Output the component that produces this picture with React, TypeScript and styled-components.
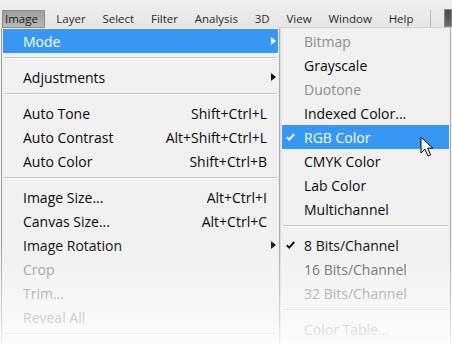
import { createGlobalStyle, styled } from 'styled-components';

const GlobalStyle = createGlobalStyle`
  html, body {
    margin: 0;
    padding: 0;
    background: #f4f4f4;
  }
  body {
    font-family: 'Open Sans', 'Noto Sans', sans-serif;
  }
`;

const Screen = styled.div`
  position: relative;
  width: 452px;
  height: 344px;
  overflow: hidden;
  background: #f4f4f4;
`;

const MenuBar = styled.nav`
  height: 28px;
  display: flex;
  align-items: flex-end;
  padding-left: 2px;
  background: linear-gradient(#efefef, #e4e4e4);
  font-size: 11.5px;
  color: #111;
`;

const BarItem = styled.div<{ $active?: boolean }>`
  height: 18px;
  line-height: 18px;
  padding: ${(p) => (p.$active ? '0 7px 0 3px' : '0 8.4px')};
  margin-right: ${(p) => (p.$active ? '3px' : '0')};
  box-sizing: border-box;
  background: ${(p) =>
    p.$active ? 'linear-gradient(#9c9c9c, #b9b9b9)' : 'transparent'};
  box-shadow: ${(p) => (p.$active ? 'inset 0 0 0 1px #8a8a8a' : 'none')};
  color: ${(p) => (p.$active ? '#1a1a1a' : '#2a2a2a')};
`;

const BarDivider = styled.div`
  width: 1px;
  height: 17px;
  margin: 0 14px 1px 8px;
  background: #b8b8b8;
`;

const BarBox = styled.div`
  width: 10px;
  height: 16px;
  margin-bottom: 1px;
  background: linear-gradient(#4a4a4a, #6a6a6a);
  border: 1px solid #888;
`;

const Menus = styled.div`
  display: flex;
  align-items: flex-start;
  font-size: 14px;
`;

const Panel = styled.div<{ $width: number }>`
  width: ${(p) => p.$width}px;
  box-sizing: border-box;
  background: #f0f0f0;
  border-left: 1px solid #9a9a9a;
  border-right: 1px solid #a8a8a8;
  padding-top: 1px;
  height: 316px;
`;

const MainPanel = styled(Panel)`
  margin-left: 1px;
`;

const SubPanel = styled(Panel)`
  border-left: 1px solid #dadada;
  border-top: 1px solid #cfcfcf;
  margin-top: -1px;
`;

const Row = styled.div<{ $active?: boolean; $tone?: 'normal' | 'dim' | 'off' }>`
  height: 24px;
  margin: 0 1px;
  display: grid;
  grid-template-columns: 20px 1fr auto 11px;
  align-items: center;
  background: ${(p) => (p.$active ? '#3797f5' : 'transparent')};
  color: ${(p) =>
    p.$active
      ? '#fff'
      : p.$tone === 'off'
      ? '#8d8d8d'
      : p.$tone === 'dim'
      ? '#555'
      : '#0a0a0a'};
  white-space: nowrap;
`;

const SubRow = styled(Row)`
  grid-template-columns: 22px 1fr;
`;

const Shortcut = styled.span`
  text-align: right;
`;

const Arrow = styled.span<{ $light?: boolean }>`
  width: 0;
  height: 0;
  margin-left: 4px;
  border-top: 4.5px solid transparent;
  border-bottom: 4.5px solid transparent;
  border-left: 5px solid ${(p) => (p.$light ? '#fff' : '#111')};
`;

const CheckCell = styled.span`
  display: flex;
  align-items: center;
  padding-left: 4px;
`;

const Separator = styled.div`
  height: 12px;
  margin: 0 2px;
  box-sizing: border-box;
  padding-top: 4px;

  &::before {
    content: '';
    display: block;
    height: 1px;
    background: #c6c6c6;
    border-bottom: 1px solid #fbfbfb;
  }
`;

const Fade = styled.div`
  position: absolute;
  left: 0;
  right: 0;
  top: 240px;
  bottom: 0;
  pointer-events: none;
  background: linear-gradient(
    rgba(255, 255, 255, 0) 0px,
    rgba(255, 255, 255, 0.2) 30px,
    rgba(255, 255, 255, 0.36) 54px,
    rgba(255, 255, 255, 0.56) 78px,
    rgba(255, 255, 255, 0.82) 104px
  );
`;

const Cursor = styled.svg`
  position: absolute;
  left: 420px;
  top: 136px;
`;

function Check({ color }: { color: string }) {
  return (
    <svg width="9" height="8" viewBox="0 0 9 8">
      <path
        d="M0.8 4.2 L3.2 6.6 L8.2 1"
        fill="none"
        stroke={color}
        strokeWidth="2"
      />
    </svg>
  );
}

type Item = {
  label?: string;
  shortcut?: string;
  sub?: boolean;
  tone?: 'normal' | 'dim' | 'off';
  active?: boolean;
  checked?: boolean;
  sep?: boolean;
};

const mainItems: Item[] = [
  { label: 'Mode', sub: true, active: true },
  { sep: true },
  { label: 'Adjustments', sub: true },
  { sep: true },
  { label: 'Auto Tone', shortcut: 'Shift+Ctrl+L' },
  { label: 'Auto Contrast', shortcut: 'Alt+Shift+Ctrl+L' },
  { label: 'Auto Color', shortcut: 'Shift+Ctrl+B' },
  { sep: true },
  { label: 'Image Size...', shortcut: 'Alt+Ctrl+I' },
  { label: 'Canvas Size...', shortcut: 'Alt+Ctrl+C' },
  { label: 'Image Rotation', sub: true },
  { label: 'Crop', tone: 'off' },
  { label: 'Trim...', tone: 'off' },
  { label: 'Reveal All', tone: 'off' },
  { sep: true },
];

const modeItems: Item[] = [
  { label: 'Bitmap', tone: 'off' },
  { label: 'Grayscale' },
  { label: 'Duotone', tone: 'off' },
  { label: 'Indexed Color...' },
  { label: 'RGB Color', active: true, checked: true },
  { label: 'CMYK Color' },
  { label: 'Lab Color' },
  { label: 'Multichannel' },
  { sep: true },
  { label: '8 Bits/Channel', checked: true },
  { label: '16 Bits/Channel', tone: 'dim' },
  { label: '32 Bits/Channel', tone: 'off' },
  { sep: true },
  { label: 'Color Table...', tone: 'off' },
];

const barItems = ['Layer', 'Select', 'Filter', 'Analysis', '3D', 'View', 'Window', 'Help'];

export default function App() {
  return (
    <>
      <GlobalStyle />
      <Screen>
        <MenuBar>
          <BarItem $active>Image</BarItem>
          {barItems.map((name) => (
            <BarItem key={name}>{name}</BarItem>
          ))}
          <BarDivider />
          <BarBox />
        </MenuBar>

        <Menus>
          <MainPanel $width={279}>
            {mainItems.map((item, i) =>
              item.sep ? (
                <Separator key={i} />
              ) : (
                <Row key={i} $active={item.active} $tone={item.tone}>
                  <span />
                  <span>{item.label}</span>
                  <Shortcut>{item.shortcut}</Shortcut>
                  {item.sub ? <Arrow $light={item.active} /> : <span />}
                </Row>
              )
            )}
          </MainPanel>

          <SubPanel $width={171}>
            {modeItems.map((item, i) =>
              item.sep ? (
                <Separator key={i} />
              ) : (
                <SubRow key={i} $active={item.active} $tone={item.tone}>
                  <CheckCell>
                    {item.checked && (
                      <Check color={item.active ? '#fff' : '#111'} />
                    )}
                  </CheckCell>
                  <span>{item.label}</span>
                </SubRow>
              )
            )}
          </SubPanel>
        </Menus>

        <Cursor width="14" height="22" viewBox="0 0 14 22">
          <path
            d="M1 1 L1 17 L5 13.2 L8 20 L10.6 18.9 L7.7 12.2 L12.8 12.2 Z"
            fill="#fff"
            stroke="#000"
            strokeWidth="1"
            strokeLinejoin="miter"
          />
        </Cursor>
        <Fade />
      </Screen>
    </>
  );
}
